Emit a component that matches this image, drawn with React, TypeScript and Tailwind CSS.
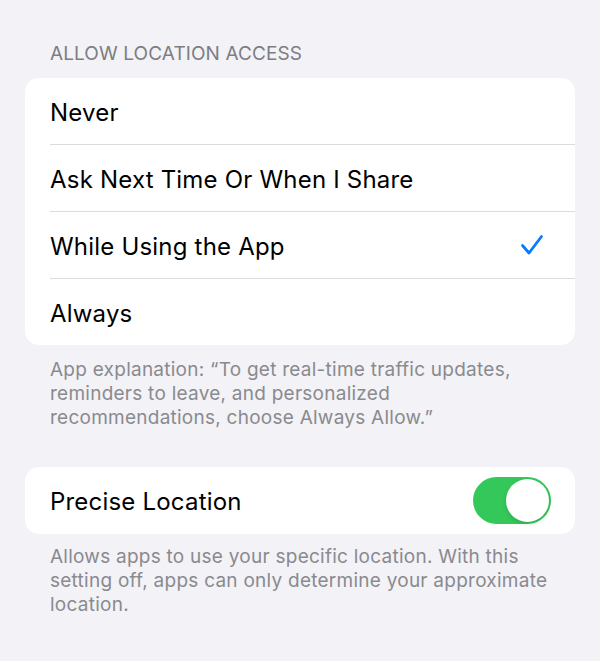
import React from "react";

const options = ["Never", "Ask Next Time Or When I Share", "While Using the App", "Always"];
const selected = "While Using the App";

function Check() {
  return (
    <svg width="24" height="22" viewBox="0 0 24 22" fill="none">
      <path d="M2.5 11.5 L9 19 L21.5 2.5" stroke="#0a7aff" strokeWidth="2.8" strokeLinecap="round" strokeLinejoin="round" />
    </svg>
  );
}

function Toggle() {
  return (
    <div className="w-[78px] h-[47px] rounded-full bg-[#34c759] flex items-center justify-end pr-[2px]">
      <div className="w-[43px] h-[43px] rounded-full bg-white shadow-[0_2px_4px_rgba(0,0,0,0.12)]" />
    </div>
  );
}

export default function App() {
  return (
    <div
      className="w-[600px] h-[661px] bg-[#f2f2f7] px-[25px] overflow-hidden"
      style={{ fontFamily: "Inter, 'Noto Sans', sans-serif" }}
    >
      <div className="pt-[42px] pl-[25px] mb-[12px] text-[19px] leading-[24px] text-[#7d7d82] tracking-[0.1px]">
        ALLOW LOCATION ACCESS
      </div>
      <div className="bg-white rounded-[14px] overflow-hidden">
        {options.map((o, i) => (
          <div key={o} className="pl-[25px]">
            <div
              className={
                i < options.length - 1
                  ? "h-[67px] flex items-center justify-between pr-[31px] border-b border-[#dcdce0] text-[24px] tracking-[0.2px] text-black"
                  : "h-[66px] flex items-center justify-between pr-[31px] text-[24px] tracking-[0.2px] text-black"
              }
            >
              <span className="pt-[4px]">{o}</span>
              {o === selected && <Check />}
            </div>
          </div>
        ))}
      </div>
      <p className="mt-[13px] px-[25px] text-[19px] leading-[24px] tracking-[0.25px] text-[#8a8a8e]">
        App explanation: “To get real-time traffic updates, reminders to leave, and personalized recommendations, choose Always Allow.”
      </p>
      <div className="mt-[37px] bg-white rounded-[14px] h-[67px] flex items-center justify-between pl-[25px] pr-[24px]">
        <span className="pt-[2px] text-[24px] tracking-[0.2px] text-black">Precise Location</span>
        <Toggle />
      </div>
      <p className="mt-[11px] px-[25px] text-[19px] leading-[24px] tracking-[0.25px] text-[#8a8a8e]">
        Allows apps to use your specific location. With this setting off, apps can only determine your approximate location.
      </p>
    </div>
  );
}
